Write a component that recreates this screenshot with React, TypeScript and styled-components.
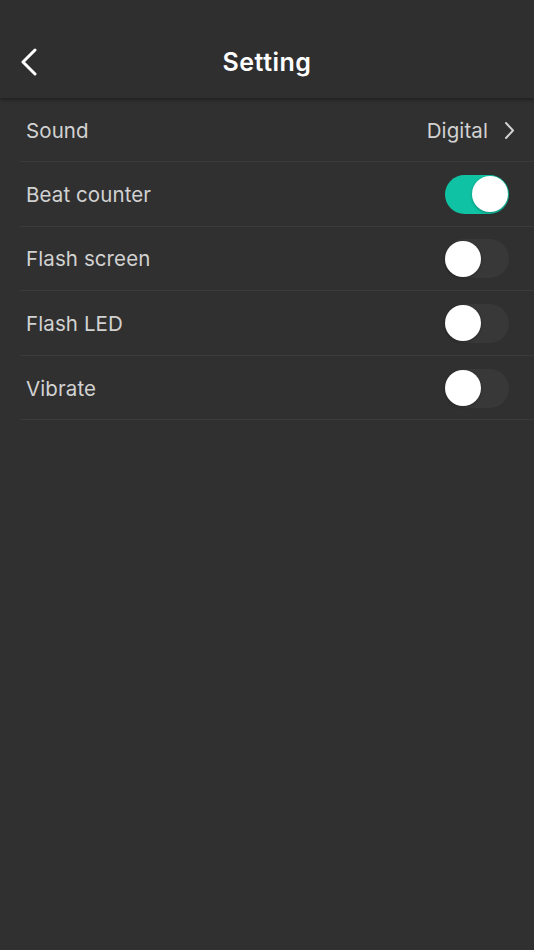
import React, { useState } from 'react';
import styled, { createGlobalStyle } from 'styled-components';

const GlobalStyle = createGlobalStyle`
  html, body {
    margin: 0;
    padding: 0;
    background: #303030;
  }
  * {
    box-sizing: border-box;
  }
`;

const Screen = styled.div`
  width: 534px;
  min-height: 950px;
  background-color: #303030;
  font-family: Inter, "Open Sans", sans-serif;
  display: flex;
  flex-direction: column;
`;

const Header = styled.header`
  height: 98px;
  padding-top: 26px;
  background-color: #2f2f2f;
  box-shadow: 0 2px 4px rgba(0, 0, 0, 0.35);
  display: grid;
  grid-template-columns: 60px 1fr 60px;
  align-items: center;
  position: relative;
  z-index: 1;
`;

const BackButton = styled.button`
  background: none;
  border: none;
  padding: 0 0 0 20px;
  height: 40px;
  display: flex;
  align-items: center;
  cursor: pointer;
`;

const Title = styled.h1`
  margin: 0;
  text-align: center;
  color: #ffffff;
  font-size: 25px;
  font-weight: 600;
  letter-spacing: 0.5px;
`;

const List = styled.div`
  padding-left: 20px;
  display: flex;
  flex-direction: column;
`;

const Row = styled.div<{ $first?: boolean }>`
  height: ${(p) => (p.$first ? '64px' : '64.6px')};
  display: flex;
  align-items: center;
  justify-content: space-between;
  padding: 1px 25px 0 6px;
  border-bottom: 1px solid #3b3b3b;
`;

const Label = styled.span`
  color: #d2d2d2;
  font-size: 20.5px;
  letter-spacing: 0.1px;
`;

const Value = styled.span`
  display: flex;
  align-items: center;
  gap: 16px;
  margin-right: -6px;
  color: #d2d2d2;
  font-size: 20.5px;
  letter-spacing: 0.1px;
`;

const Track = styled.button<{ $on: boolean }>`
  width: 64px;
  height: 39px;
  border-radius: 20px;
  border: none;
  padding: 0;
  margin: 0;
  cursor: pointer;
  position: relative;
  background-color: ${(p) => (p.$on ? '#0fc2a3' : '#383838')};
  transition: background-color 0.2s;
`;

const Knob = styled.span<{ $on: boolean }>`
  position: absolute;
  top: 1.5px;
  left: ${(p) => (p.$on ? '27px' : '0px')};
  width: 36px;
  height: 36px;
  border-radius: 50%;
  background-color: #ffffff;
  box-shadow: 0 1px 3px rgba(0, 0, 0, 0.3);
  transition: left 0.2s;
`;

const Toggle: React.FC<{ on: boolean; onChange: () => void }> = ({ on, onChange }) => (
  <Track $on={on} onClick={onChange}>
    <Knob $on={on} />
  </Track>
);

const App: React.FC = () => {
  const [toggles, setToggles] = useState<Record<string, boolean>>({
    'Beat counter': true,
    'Flash screen': false,
    'Flash LED': false,
    Vibrate: false,
  });

  return (
    <Screen>
      <GlobalStyle />
      <Header>
        <BackButton aria-label="Back">
          <svg width="18" height="28" viewBox="0 0 18 28">
            <path d="M15 2 L3 14 L15 26" fill="none" stroke="#ffffff" strokeWidth="3" strokeLinecap="round" strokeLinejoin="round" />
          </svg>
        </BackButton>
        <Title>Setting</Title>
        <span />
      </Header>

      <List>
        <Row $first>
          <Label>Sound</Label>
          <Value>
            Digital
            <svg width="11" height="19" viewBox="0 0 11 19">
              <path d="M2 2 L9 9.5 L2 17" fill="none" stroke="#d2d2d2" strokeWidth="2" strokeLinecap="round" strokeLinejoin="round" />
            </svg>
          </Value>
        </Row>
        {Object.keys(toggles).map((name) => (
          <Row key={name}>
            <Label>{name}</Label>
            <Toggle
              on={toggles[name]}
              onChange={() => setToggles((t) => ({ ...t, [name]: !t[name] }))}
            />
          </Row>
        ))}
      </List>
    </Screen>
  );
};

export default App;
